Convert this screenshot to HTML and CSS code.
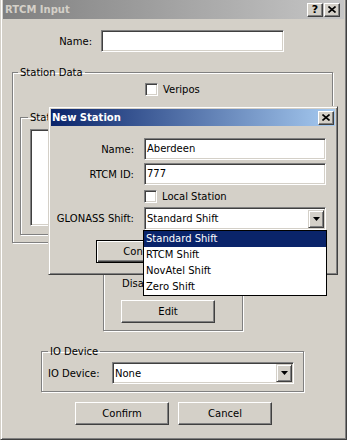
FILE: index.html
```html
<!DOCTYPE html>
<html lang="en">
<head>
  <meta charset="UTF-8" />
  <title>RTCM Input</title>
  <link rel="stylesheet" href="styles.css">
</head>
<body>
  <div class="window">
    <div class="titlebar inactive">
      <span>RTCM Input</span>
      <div class="caption-btns">
        <div class="cap help">?</div>
        <div class="cap"><svg width="8" height="7" viewBox="0 0 8 7"><path d="M0.5 0.5L7.5 6.5M7.5 0.5L0.5 6.5" stroke="#000" stroke-width="1.6"/></svg></div>
      </div>
    </div>

    <div class="row name-row">
      <label class="lbl">Name:</label>
      <div class="edit wide"></div>
    </div>

    <fieldset class="group station-data">
      <legend>Station Data</legend>
      <div class="check-row veripos"><span class="check"></span>Veripos</div>
      <fieldset class="group stations">
        <legend>Stations</legend>
        <div class="listbox"></div>
      </fieldset>
    </fieldset>

    <fieldset class="group disabled">
      <div class="disabled-lbl">Disabled</div>
      <div class="btn edit-btn">Edit</div>
    </fieldset>

    <fieldset class="group io">
      <legend>IO Device</legend>
      <div class="row io-row">
        <label class="lbl">IO Device:</label>
        <div class="combo"><span class="combo-text">None</span><span class="arrow"><svg width="7" height="4" viewBox="0 0 7 4"><path d="M0 0H7L3.5 4Z" fill="#000"/></svg></span></div>
      </div>
    </fieldset>

    <div class="buttons">
      <div class="btn">Confirm</div>
      <div class="btn">Cancel</div>
    </div>

    <div class="dialog">
      <div class="titlebar active">
        <span>New Station</span>
        <div class="cap"><svg width="8" height="7" viewBox="0 0 8 7"><path d="M0.5 0.5L7.5 6.5M7.5 0.5L0.5 6.5" stroke="#000" stroke-width="1.6"/></svg></div>
      </div>
      <div class="row d-name">
        <label class="lbl">Name:</label>
        <div class="edit">Aberdeen</div>
      </div>
      <div class="row d-id">
        <label class="lbl">RTCM ID:</label>
        <div class="edit">777</div>
      </div>
      <div class="check-row local"><span class="check"></span>Local Station</div>
      <div class="row d-shift">
        <label class="lbl">GLONASS Shift:</label>
        <div class="combo">
          <span class="combo-text">Standard Shift</span>
          <span class="arrow"><svg width="7" height="4" viewBox="0 0 7 4"><path d="M0 0H7L3.5 4Z" fill="#000"/></svg></span>
          <ul class="dropdown">
            <li class="sel">Standard Shift</li>
            <li>RTCM Shift</li>
            <li>NovAtel Shift</li>
            <li>Zero Shift</li>
          </ul>
        </div>
      </div>
      <div class="buttons d-buttons">
        <div class="btn default">Confirm</div>
        <div class="btn">Cancel</div>
      </div>
    </div>
  </div>
</body>
</html>
```

FILE: styles.css
```css
* {
  box-sizing: border-box;
}
body {
  margin: 0;
  font-family: "DejaVu Sans", Tahoma, sans-serif;
  font-size: 10px;
  color: #000;
  background: #d4d0c8;
}
.window {
  position: relative;
  width: 347px;
  height: 440px;
  background: #d4d0c8;
  border-left: 1px solid #d4d0c8;
  border-right: 1px solid #404040;
  border-bottom: 1px solid #404040;
  box-shadow: inset 1px 0 #fff, inset -1px -1px #808080;
  padding: 0 2px 2px 2px;
}
.titlebar {
  display: flex;
  align-items: center;
  justify-content: space-between;
  height: 19px;
  padding: 0 4px 0 2px;
  font-weight: bold;
  font-size: 10px;
}
.titlebar.inactive {
  background: linear-gradient(to right, #808080, #c6c6c6);
  color: #d4d0c8;
}
.titlebar.active {
  height: 17px;
  padding: 0 1px 0 1px;
  background: linear-gradient(to right, #0a246a, #a6caf0);
  color: #fff;
}
.caption-btns {
  display: flex;
  gap: 1px;
}
.cap {
  width: 16px;
  height: 14px;
  display: flex;
  align-items: center;
  justify-content: center;
  background: #d4d0c8;
  border: 1px solid;
  border-color: #fff #404040 #404040 #fff;
  box-shadow: inset -1px -1px #808080;
  color: #000;
  font-size: 11px;
  font-weight: bold;
}
.row {
  display: flex;
  align-items: center;
}
.lbl {
  text-align: right;
}
.edit {
  height: 22px;
  background: #fff;
  border: 1px solid;
  border-color: #808080 #fff #fff #808080;
  box-shadow: inset 1px 1px #404040, inset -1px -1px #d4d0c8;
  padding-left: 2px;
  line-height: 20px;
}
.name-row {
  margin-top: 11px;
}
.name-row .lbl {
  width: 89px;
  margin-right: 9px;
}
.edit.wide {
  width: 183px;
}
.group {
  margin: 0;
  padding: 0;
  min-inline-size: 0;
  border: 1px solid #808080;
  box-shadow: inset 1px 1px #fff, 1px 1px #fff;
}
.group legend {
  line-height: 13px;
  padding: 0 2px;
  margin-left: 5px;
}
.station-data {
  margin: 14px 11px 0 9px;
  padding-bottom: 7px;
}
.check-row {
  display: flex;
  align-items: center;
  gap: 5px;
  line-height: 13px;
}
.check {
  width: 13px;
  height: 13px;
  background: #fff;
  border: 1px solid;
  border-color: #808080 #fff #fff #808080;
  box-shadow: inset 1px 1px #404040, inset -1px -1px #d4d0c8;
}
.veripos {
  margin: 4px 0 0 132px;
}
.stations {
  margin: 15px 7px 0 7px;
  padding: 0 0 8px 0;
}
.stations legend {
  margin-left: 7px;
}
.listbox {
  margin: 5px 0 0 9px;
  width: 260px;
  height: 97px;
  background: #fff;
  border: 1px solid;
  border-color: #808080 #fff #fff #808080;
  box-shadow: inset 1px 1px #404040, inset -1px -1px #d4d0c8;
}
.disabled {
  margin: 7px 0 0 100px;
  width: 140px;
  padding: 26px 0 7px 17px;
}
.disabled-lbl {
  line-height: 13px;
  margin-left: 1px;
}
.btn {
  width: 94px;
  height: 23px;
  display: flex;
  align-items: center;
  justify-content: center;
  background: #d4d0c8;
  border: 1px solid;
  border-color: #fff #404040 #404040 #fff;
  box-shadow: inset -1px -1px #808080;
}
.btn.default {
  border-color: #000;
  box-shadow: inset 1px 1px #fff, inset -1px -1px #404040, inset -2px -2px #808080;
}
.edit-btn {
  margin-top: 10px;
}
.io {
  margin: 14px 0 0 38px;
  width: 263px;
  padding: 0 0 7px 6px;
}
.io legend {
  margin-left: 0;
}
.io-row {
  margin-top: 4px;
}
.io-row .lbl {
  width: 64px;
  text-align: left;
}
.combo {
  position: relative;
  display: flex;
  align-items: center;
  width: 182px;
  height: 22px;
  background: #fff;
  border: 1px solid;
  border-color: #808080 #fff #fff #808080;
  box-shadow: inset 1px 1px #404040, inset -1px -1px #d4d0c8;
}
.combo-text {
  flex: 1;
  padding-left: 2px;
}
.arrow {
  width: 16px;
  height: 18px;
  margin-right: 1px;
  display: flex;
  align-items: center;
  justify-content: center;
  background: #d4d0c8;
  border: 1px solid;
  border-color: #d4d0c8 #404040 #404040 #d4d0c8;
  box-shadow: inset 1px 1px #fff, inset -1px -1px #808080;
}
.buttons {
  display: flex;
  justify-content: center;
  gap: 9px;
  margin-top: 10px;
}
.dialog {
  position: absolute;
  left: 47px;
  top: 106px;
  width: 290px;
  height: 169px;
  background: #d4d0c8;
  border: 1px solid;
  border-color: #d4d0c8 #404040 #404040 #d4d0c8;
  box-shadow: inset 1px 1px #fff, inset -1px -1px #808080;
  padding: 2px;
}
.dialog .lbl {
  width: 83px;
  margin-right: 10px;
}
.dialog .edit {
  width: 182px;
}
.d-name {
  margin-top: 12px;
}
.d-id {
  margin-top: 3px;
}
.local {
  margin: 5px 0 0 93px;
}
.d-shift {
  margin-top: 4px;
}
.d-shift .combo {
  height: 23px;
}
.dropdown {
  position: absolute;
  top: 22px;
  left: -2px;
  width: 184px;
  margin: 0;
  padding: 0;
  list-style: none;
  background: #fff;
  border: 1px solid #000;
  z-index: 2;
}
.dropdown li {
  height: 16px;
  line-height: 16px;
  padding-left: 2px;
}
.dropdown li.sel {
  background: #0a246a;
  color: #fff;
}
.d-buttons {
  justify-content: flex-start;
  gap: 10px;
  margin: 10px 0 0 45px;
}
```
